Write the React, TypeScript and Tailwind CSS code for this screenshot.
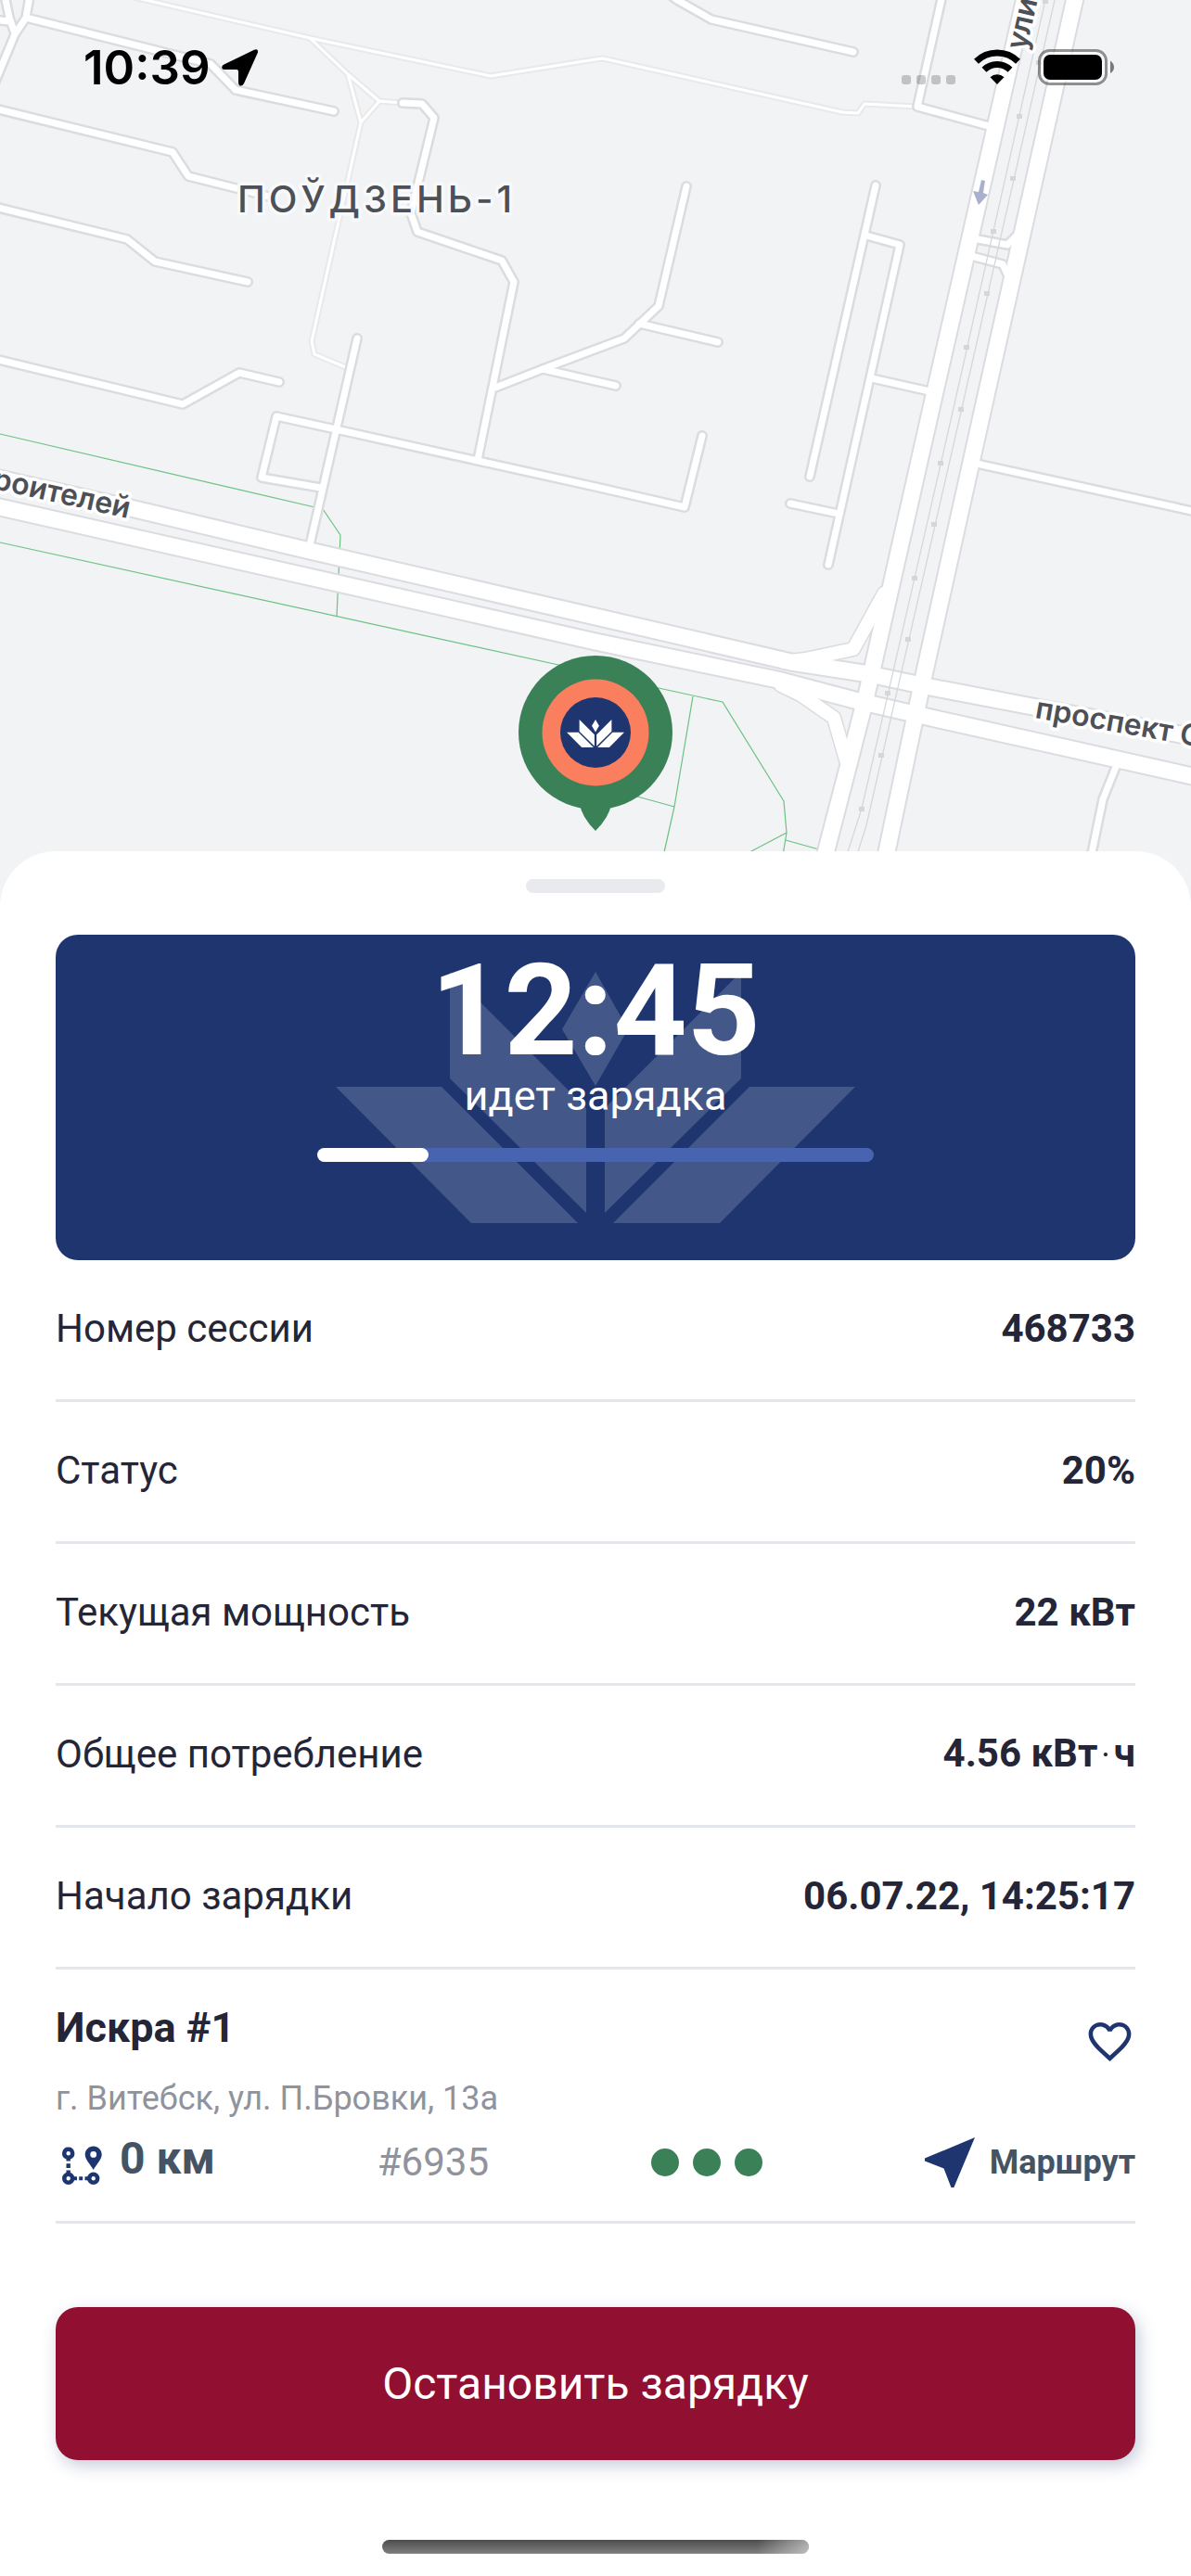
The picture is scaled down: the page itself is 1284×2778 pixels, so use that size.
import React from "react";
import { MdFavoriteBorder } from "react-icons/md";

const avenues = [
  "M-10 514L141 548L334 594L642 665L853 714L937 727L998 740L1113 762L1294 796",
  "M-10 545L0 547L364 629L642 692L838 733L925 756L986 770L1294 839",
  "M1109 -20L1004 440L934 750L914 828L888 928",
  "M1163 -20L1060 440L995 733L954 928",
];

const slipRoads = [
  "M845 714L868 711L920 700L953 640",
  "M842 739L863 749L899 774L914 826",
];

const streets = [
  "M-10 21L10 23M4 -10L10 19L16 36M33 -10L28 19L16 37L-8 95",
  "M28 19L227 69L254 97L360 120",
  "M-10 116L186 164L203 190L290 212",
  "M-10 222L137 258L167 282L267 304",
  "M-10 386L197 436L258 402L301 412",
  "M434 111L455 112L468 127L443 230L450 250L541 281L554 304L515 496",
  "M534 418L585 398L673 365L710 330L740 201",
  "M585 398L664 416M689 349L774 369",
  "M385 365L334 588",
  "M346 526L282 515L298 449L362 463L642 525L738 547L757 470",
  "M718 -9L730 0L767 21L920 56",
  "M1017 -10L989 115L1066 136",
  "M944 200L873 514",
  "M934 254L970 264L893 609M940 408L1002 422M852 543L904 554",
  "M1053 500L1294 553",
  "M1203 827L1189 862L1175 930",
  "M1049 257L1086 264L1098 252M1047 276L1081 285L1088 300",
];

const footpaths = [
  "M144 -3L334 41L529 82L642 64L650 63L908 121L925 122L932 112L988 115",
  "M334 41L375 80L409 109L389 132L375 80M409 109L434 111",
  "M389 132L336 368L339 382L375 397",
];

const parkBorders = [
  "M0 468L348 549L367 577L363 665",
  "M0 585L602 717L710 742L779 757L845 864L848 898L843 928",
  "M791 928L848 898M847 906L890 918",
  "M747 751L727 870L714 928M687 859L727 870",
];

const tramPoles = [
  [1127, 1], [1120, 67], [1099, 125], [1092, 192], [1071, 249], [1064, 316],
  [1042, 374], [1036, 441], [1014, 499], [1007, 565], [986, 623], [979, 689],
  [957, 747], [950, 814], [929, 872],
];

function CityMap() {
  return (
    <svg
      className="absolute inset-0 h-full w-full font-[Inter,sans-serif]"
      viewBox="0 0 1284 978"
      preserveAspectRatio="xMidYMin slice"
      fill="none"
      strokeLinejoin="round"
      aria-label="Карта"
    >
      <g stroke="#6cc183" strokeWidth="1.2">
        {parkBorders.map((d) => <path key={d} d={d} />)}
      </g>
      <g stroke="#e9e9ea" strokeWidth="7">
        {footpaths.map((d) => <path key={d} d={d} />)}
      </g>
      <g stroke="#fff" strokeWidth="3">
        {footpaths.map((d) => <path key={d} d={d} />)}
      </g>
      <g stroke="#dbdce0" strokeLinecap="round">
        <g strokeWidth="12">
          {streets.map((d) => <path key={d} d={d} />)}
        </g>
        <g strokeWidth="17">
          {slipRoads.map((d) => <path key={d} d={d} />)}
        </g>
        <g strokeWidth="21">
          {avenues.map((d) => <path key={d} d={d} />)}
        </g>
      </g>
      <g stroke="#fff" strokeLinecap="round">
        <g strokeWidth="7">
          {streets.map((d) => <path key={d} d={d} />)}
        </g>
        <g strokeWidth="14">
          {slipRoads.map((d) => <path key={d} d={d} />)}
        </g>
        <g strokeWidth="17">
          {avenues.map((d) => <path key={d} d={d} />)}
        </g>
      </g>
      <g stroke="#d5d8da" strokeWidth="1.3">
        <path d="M1127 0L1028 440L929 872L911 928" />
        <path d="M1137 0L1037 440L934 890L922 928" />
      </g>
      <g fill="#d3d7da">
        {tramPoles.map(([x, y]) => <rect key={y} x={x - 3} y={y - 2} width="6" height="5" />)}
      </g>
      <path d="M1058 194L1062 195L1060 208L1065 210L1055 221L1049 206L1055 207Z" fill="#aab0cc" />
      <g
        fill="#4d5157"
        stroke="#fff"
        strokeWidth="7"
        paintOrder="stroke"
        fontWeight="600"
        fontSize="32"
      >
        <text x="256" y="229" fontSize="40" fontWeight="500" stroke="#f8f9fa" className="tracking-widest">ПОЎДЗЕНЬ-1</text>
        <text transform="translate(138 559) rotate(12.5)" textAnchor="end">роителей</text>
        <text transform="translate(1115 774) rotate(10)">проспект С</text>
        <text transform="translate(1106 55) rotate(-77)">ули</text>
      </g>
    </svg>
  );
}

function Lotus({ className }: { className: string }) {
  return (
    <svg className={className} viewBox="0 0 560 271" fill="currentColor" aria-hidden="true">
      <path d="M280 0L315 62L280 123L244 62Z" />
      <path d="M123 0L270 147V260L123 115Z" />
      <path d="M437 0L290 147V260L437 115Z" />
      <path d="M0 124H114L261 271H146Z" />
      <path d="M560 124H446L299 271H414Z" />
    </svg>
  );
}

function StationPin() {
  return (
    <button
      type="button"
      aria-label="Искра #1"
      className="absolute top-[707px] left-1/2 flex h-[189px] w-[166px] -translate-x-1/2 justify-center"
    >
      <svg className="absolute inset-0 h-full w-full" viewBox="0 0 166 189" aria-hidden="true">
        <path d="M66 160H100Q98 174 83 189Q68 174 66 160Z" fill="#3b8157" />
        <circle cx="83" cy="83" r="83" fill="#3b8157" />
        <circle cx="83" cy="83" r="57.500" fill="#fa7f5e" />
        <circle cx="83" cy="83" r="38" fill="#1e3570" />
      </svg>
      <Lotus className="relative mt-[69px] h-[30px] w-[62px] text-white" />
    </button>
  );
}

function StatusBar() {
  return (
    <header className="relative flex items-start justify-between pt-[48px] pr-[82px] pl-[90px] text-black">
      <div className="flex items-center gap-3">
        <span className="font-[Inter,sans-serif] text-[51px] leading-[50px] font-semibold">10:39</span>
        <svg className="h-10 w-10" viewBox="0 0 40 40" fill="currentColor" aria-hidden="true">
          <path d="M35 .8Q39.500 -.8 39 3.500L24 37Q22.500 40 19.500 39.500Q18 39 18 36V24Q18 22 16 22H3Q.3 22 .2 19.500Q.2 17.500 2.500 16.400Z" />
        </svg>
      </div>
      <div className="flex items-start gap-[19px] pt-[5px]">
        <div className="flex items-start gap-5">
          <div className="flex gap-1.5 pt-7" aria-label="Нет сети">
            <i className="h-2.5 w-2.5 rounded-[3px] bg-black/20" />
            <i className="h-2.5 w-2.5 rounded-[3px] bg-black/20" />
            <i className="h-2.5 w-2.5 rounded-[3px] bg-black/20" />
            <i className="h-2.5 w-2.5 rounded-[3px] bg-black/20" />
          </div>
          <svg className="h-[38px] w-[50px]" viewBox="0 0 50 38" aria-hidden="true">
            <g fill="none" stroke="#000" strokeWidth="7">
              <path d="M2.500 13.200A32 32 0 0 1 47.500 13.200" />
              <path d="M11 22.300A20 20 0 0 1 39 22.300" />
            </g>
            <path d="M25 38L17.500 30.200A11 11 0 0 1 32.500 30.200Z" />
          </svg>
        </div>
        <svg className="h-[39px] w-[83px]" viewBox="0 0 83 39" aria-hidden="true">
          <rect x="1.500" y="1.500" width="72" height="36" rx="11" fill="#fff" fillOpacity=".45" stroke="#000" strokeOpacity=".42" strokeWidth="3" />
          <rect x="6" y="6" width="63" height="27" rx="7" />
          <path d="M78 12.500Q82 15.500 82 19.500T78 26Z" fillOpacity=".5" />
        </svg>
      </div>
    </header>
  );
}

function RouteIcon() {
  return (
    <svg className="mt-2.5 h-[42px] w-11" viewBox="0 0 44 42" fill="#1e3570" fillRule="evenodd" aria-hidden="true">
      <path d="M6.700 1.500a6.700 6.700 0 0 1 2.200 13V16.500H4.500V14.500a6.700 6.700 0 0 1 2.200-13Zm0 4.400a2.200 2.200 0 1 0 0 4.500 2.200 2.200 0 1 0 0-4.500Z" />
      <path d="M33.700.5c5 0 9 4 9 9C42.700 15 37 20 33.700 26 30.400 20 24.700 15 24.700 9.500c0-5 4-9 9-9Zm0 5.500a3.400 3.400 0 1 0 0 6.800 3.400 3.400 0 1 0 0-6.800Z" />
      <path d="M4.500 19.300h4.400v4.700h-4.400zM4.500 26.500h4.400v4h-4.400zM12 33.200h4v4h-4zM18.200 33.200h4v4h-4zM24.500 33.200h4v4h-4z" />
      <path d="M6.700 28.600a6.700 6.700 0 1 1 0 13.400 6.700 6.700 0 1 1 0-13.400Zm0 4.500a2.200 2.200 0 1 0 0 4.400 2.200 2.200 0 1 0 0-4.400Z" />
      <path d="M33.700 28.600a6.700 6.700 0 1 1 0 13.400 6.700 6.700 0 1 1 0-13.400Zm0 4.500a2.200 2.200 0 1 0 0 4.400 2.200 2.200 0 1 0 0-4.400Z" />
    </svg>
  );
}

const details: [string, React.ReactNode][] = [
  ["Номер сессии", "468733"],
  ["Статус", "20%"],
  ["Текущая мощность", "22 кВт"],
  [
    "Общее потребление",
    <>4.56 кВт<span className="mx-1 text-[36px] font-normal">·</span>ч</>,
  ],
  ["Начало зарядки", "06.07.22, 14:25:17"],
];

export default function App() {
  const progress = 20;
  return (
    <main className="min-h-screen bg-white font-[Roboto,sans-serif] text-[#242638]">
      <section className="relative h-[978px] overflow-hidden bg-[#f1f3f5]">
        <CityMap />
        <StatusBar />
        <StationPin />
      </section>

      <section className="relative -mt-[60px] flex flex-col rounded-t-[60px] bg-white px-[60px] pt-[30px] pb-6">
        <div className="h-[15px] w-[150px] self-center rounded-full bg-[#e9eaee]" />

        <div className="relative mt-[45px] flex h-[351px] flex-col items-center overflow-hidden rounded-3xl bg-[#1e3570] pt-[13px] text-white">
          <Lotus className="absolute top-10 h-[271px] w-[560px] text-white/17" />
          <p className="relative text-[138px] leading-none font-bold">12:45</p>
          <p className="relative text-[45px] leading-none">идет зарядка</p>
          <div
            role="progressbar"
            aria-label="идет зарядка"
            aria-valuenow={progress}
            className="relative mt-[34px] h-[15px] w-[600px] rounded-full bg-[#4864b0]"
          >
            <div className="h-full rounded-full bg-white" style={{ width: `${progress}%` }} />
          </div>
        </div>

        <dl>
          {details.map(([label, value]) => (
            <div
              key={label}
              className="flex h-[153px] items-center justify-between border-b-3 border-[#e3e7ed] pb-0.5 text-[42px] leading-[48px]"
            >
              <dt>{label}</dt>
              <dd className="font-bold">{value}</dd>
            </div>
          ))}
        </dl>

        <article className="border-b-3 border-[#e3e7ed] pt-9 pb-[35px]">
          <div className="flex items-start justify-between">
            <div>
              <h2 className="text-[45px] leading-[54px] font-bold">Искра #1</h2>
              <p className="mt-7 text-[36px] leading-[42px] text-[#90939c]">г. Витебск, ул. П.Бровки, 13а</p>
            </div>
            <button type="button" aria-label="В избранное" className="mt-[14px] text-[#1e3570]">
              <MdFavoriteBorder className="h-[55px] w-[55px]" />
            </button>
          </div>
          <div className="mt-5 flex h-14 items-center justify-between">
            <div className="flex items-start gap-[18px] self-start pl-[7px]">
              <RouteIcon />
              <span className="text-[48px] leading-none font-bold text-[#465363]">0 км</span>
            </div>
            <span className="text-[42px] leading-none text-[#90939c]">#6935</span>
            <div className="flex gap-[15px]" aria-label="Свободно 3">
              <i className="h-[30px] w-[30px] rounded-full bg-[#3b8157]" />
              <i className="h-[30px] w-[30px] rounded-full bg-[#3b8157]" />
              <i className="h-[30px] w-[30px] rounded-full bg-[#3b8157]" />
            </div>
            <a href="#route" className="flex items-center gap-4 text-[36px] leading-none font-bold text-[#465363]">
              <svg className="h-14 w-[54px] text-[#1e3570]" viewBox="3 3 18 18" fill="currentColor" aria-hidden="true">
                <path d="M21 3L3 10.530v.98l6.840 2.650L12.480 21h.98L21 3z" />
              </svg>
              Маршрут
            </a>
          </div>
        </article>

        <button
          type="button"
          className="mt-[90px] h-[165px] rounded-3xl bg-[#910f30] text-[48px] leading-none text-white shadow-[4px_6px_18px_rgba(30,53,112,0.25)]"
        >
          Остановить зарядку
        </button>

        <div className="mt-[86px] h-[15px] w-[460px] self-center rounded-full bg-linear-to-b from-[#4d4d4d] to-[#808080]">
          <div className="ml-auto h-full w-14 rounded-r-full bg-linear-to-r from-white/0 to-white/50" />
        </div>
      </section>
    </main>
  );
}
